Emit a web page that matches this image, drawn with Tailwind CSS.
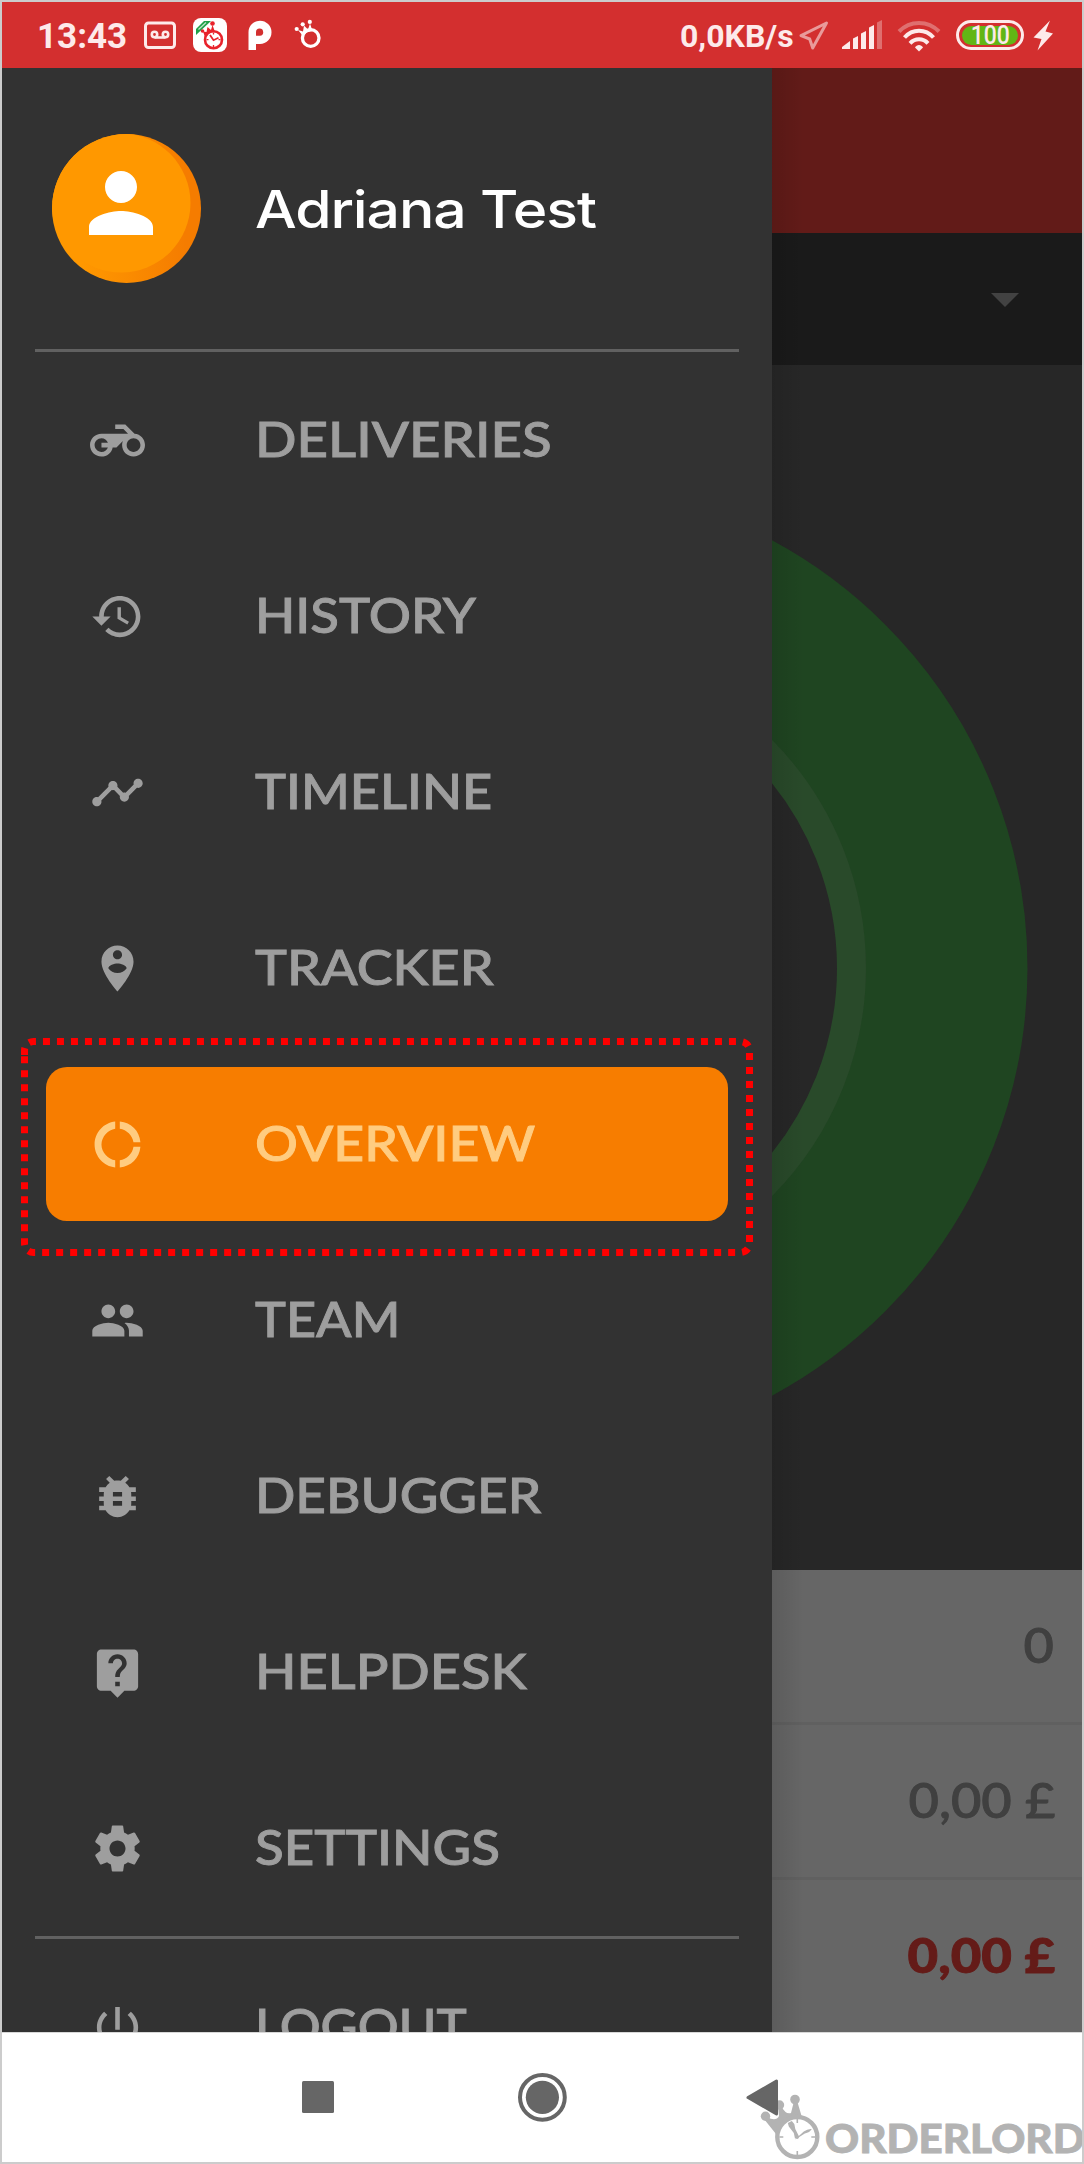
<!DOCTYPE html>
<html lang="en">
<head>
<meta charset="utf-8">
<title>Overview</title>
<script src="https://cdn.jsdelivr.net/npm/@tailwindcss/browser@4"></script>
</head>
<body class="bg-white">
<div class="relative flex h-[2164px] w-[1084px] flex-col overflow-hidden border-2 border-[#cccccc] bg-white font-['Lato',sans-serif]">

  <!-- Status bar -->
  <header class="flex h-[66px] shrink-0 items-center justify-between bg-[#d32f2f] font-['Roboto',sans-serif] text-[#fdeaea]">
    <div class="flex items-center pl-[35px]">
      <span class="w-[107px] pt-0.5 text-[35px] leading-none font-bold">13:43</span>
      <svg class="h-[66px] w-[200px]" viewBox="144 2 200 66" fill="none">
        <rect x="145.500" y="23" width="29" height="24.500" rx="3" stroke="#fdeaea" stroke-width="3"/>
        <g stroke="#fdeaea" stroke-width="2.600"><circle cx="154.500" cy="34.500" r="2.700"/><circle cx="165.500" cy="34.500" r="2.700"/><path d="M154.500 37.500h11"/></g>
        <rect x="193" y="18" width="34" height="34" rx="8" fill="#fff"/>
        <path d="M196 35v-6l8-8h7z" fill="#1fa048"/>
        <path d="M198.500 29.500l7.500-7" stroke="#bfe6ca" stroke-width="1.200"/>
        <g fill="#e8222b"><path d="M205 37l-2-5.500 3.500 .5 1-5 3.500 3 1.500-5 2.500 7z"/><circle cx="202.500" cy="31" r="1.800"/><circle cx="212.500" cy="23.500" r="2.300"/></g>
        <circle cx="213.500" cy="39.700" r="8.500" fill="#fff" stroke="#e8222b" stroke-width="2.600"/>
        <path d="M210 35l3.500 5.200 5-2.400" stroke="#e8222b" stroke-width="1.800"/>
        <path d="M213.500 32.500v2M213.500 45v2M206.500 39.700h2M218.500 39.700h2" stroke="#e8222b" stroke-width="1.300"/>
        <path fill-rule="evenodd" fill="#fff" d="M248.500 50V32.300a11.500 11.600 0 1 1 11.500 11.600h-4V50zM256 35.800h4a3.600 3.600 0 1 0-4-3.600z"/>
        <circle cx="310.700" cy="38" r="8.300" stroke="#fff" stroke-width="3.300"/>
        <path d="M303 36l-5-6 5 1.500 1-6 4 4 2-6 2.500 7.500-6 1.500z" fill="#fff"/>
        <g fill="#fff"><circle cx="296.700" cy="29" r="2.100"/><circle cx="302.700" cy="24.300" r="2.100"/><circle cx="309.800" cy="21.900" r="2.100"/></g>
      </svg>
    </div>
    <div class="flex items-center">
      <span class="w-[117px] pt-0.5 text-[32px] leading-none font-bold">0,0KB/s</span>
      <svg class="h-[66px] w-[158px]" viewBox="797 2 158 66" fill="none">
        <path d="M826.500 23L801 35.700l8.700 3.300 3 9z" stroke="#e99a9a" stroke-width="3" stroke-linejoin="round"/>
        <path fill="#fdeaea" d="M842 49v-2l8-6v8zM853 49V38.500l5-2.500v13zM861 49V33.500l5-2.500v18zM869 49V27.500l5-2.500v24z"/>
        <path fill="#df6f6f" d="M877 49V22.500l5-2.500v29z"/>
        <path d="M899 31.500c11-11.500 29-11.500 40 0" stroke="#df6f6f" stroke-width="4"/>
        <path d="M904.500 37.500c8-9 21-9 29 0M910 43.300c5-5.300 13-5.300 18 0" stroke="#fdeaea" stroke-width="4"/>
        <path d="M915 47.500c1.500-3.500 6.500-3.500 8 0l-4 4z" fill="#fdeaea"/>
      </svg>
      <div class="ml-px flex h-[30px] w-[68px] items-center justify-center rounded-full border-[3px] border-[#fdeaea]">
        <div class="flex h-[19px] w-14 items-center justify-center rounded-full bg-[#62b515]">
          <span class="scale-x-[.92] text-[25px] leading-none font-medium">100</span>
        </div>
      </div>
      <svg class="h-[66px] w-[58px]" viewBox="1024 2 58 66"><path fill="#fdeaea" d="M1050 20.500L1033.500 37.500l8 1.500-4 11.500L1053 33.500l-7.500-2z"/></svg>
    </div>
  </header>

  <main class="flex h-[1964px] shrink-0">
    <!-- Navigation drawer -->
    <aside class="h-full w-[770px] shrink-0 overflow-hidden bg-[#323232]">
      <div class="flex h-[281px] items-center pl-[50px]">
        <svg class="size-[149px] shrink-0" viewBox="0 0 149 149">
          <defs>
            <linearGradient id="rim"><stop offset=".2" stop-color="#ff9800"/><stop offset=".9" stop-color="#f57c00"/></linearGradient>
            <clipPath id="disc"><circle cx="74.500" cy="74.500" r="74.500"/></clipPath>
          </defs>
          <circle cx="74.500" cy="74.500" r="74.500" fill="url(#rim)"/>
          <circle cx="69" cy="69" r="69.500" fill="#ff9800" clip-path="url(#disc)"/>
          <path transform="translate(21 21) scale(4)" fill="#fff" d="M12 12c2.210 0 4-1.790 4-4s-1.790-4-4-4-4 1.790-4 4 1.790 4 4 4zm0 2c-2.670 0-8 1.340-8 4v2h16v-2c0-2.660-5.330-4-8-4z"/>
        </svg>
        <span class="ml-[54px] origin-left scale-x-[1.133] pt-0.5 font-['Inter',sans-serif] text-[52px] leading-none font-medium tracking-[-1px] whitespace-nowrap text-white">Adriana Test</span>
      </div>
      <div class="mx-[33px] h-[3px] bg-[#616161]"></div>

      <nav class="text-[48px] leading-none font-medium text-[#9e9e9e] [-webkit-text-stroke:0.9px]">
        <div class="flex h-44 items-center pl-[88px]">
          <svg class="size-[55px]" viewBox="0 0 24 24" fill="currentColor"><path d="M19.440 9.030L15.410 5H11v2h3.590l2 2H5c-2.800 0-5 2.200-5 5s2.200 5 5 5c2.460 0 4.450-1.690 4.900-4h1.650l2.770-2.770c-.21.54-.32 1.140-.32 1.770 0 2.800 2.200 5 5 5s5-2.200 5-5c0-2.650-1.970-4.770-4.560-4.970zM7.820 15C7.400 16.150 6.280 17 5 17c-1.630 0-3-1.370-3-3s1.370-3 3-3c1.280 0 2.400.85 2.820 2H5v2h2.820zM19 17c-1.660 0-3-1.340-3-3s1.340-3 3-3 3 1.340 3 3-1.340 3-3 3z"/></svg>
          <span class="ml-[110px] origin-left scale-x-[1.138] pb-0.5">DELIVERIES</span>
        </div>
        <div class="flex h-44 items-center pl-[88px]">
          <svg class="size-[55px]" viewBox="0 0 24 24" fill="currentColor"><path d="M13 3c-4.970 0-9 4.030-9 9H1l3.890 3.890.07.14L9 12H6c0-3.870 3.130-7 7-7s7 3.130 7 7-3.130 7-7 7c-1.930 0-3.680-.79-4.940-2.060l-1.420 1.420C8.270 19.990 10.510 21 13 21c4.970 0 9-4.030 9-9s-4.030-9-9-9zm-1 5v5l4.280 2.540.72-1.210-3.500-2.080V8H12z"/></svg>
          <span class="ml-[110px] origin-left scale-x-[1.098] pb-0.5">HISTORY</span>
        </div>
        <div class="flex h-44 items-center pl-[88px]">
          <svg class="size-[55px]" viewBox="0 0 24 24" fill="currentColor"><path d="M23 8c0 1.100-.9 2-2 2-.18 0-.35-.02-.51-.07l-3.560 3.550c.05.16.07.34.07.52 0 1.100-.9 2-2 2s-2-.9-2-2c0-.18.02-.36.07-.52l-2.550-2.550c-.16.05-.34.07-.52.07s-.36-.02-.52-.07l-4.550 4.560c.05.16.07.33.07.51 0 1.100-.9 2-2 2s-2-.9-2-2 .9-2 2-2c.18 0 .35.02.51.07l4.560-4.550C8.020 9.360 8 9.180 8 9c0-1.100.9-2 2-2s2 .9 2 2c0 .18-.02.36-.07.52l2.550 2.550c.16-.05.34-.07.52-.07s.36.02.52.07l3.550-3.560C19.020 8.350 19 8.180 19 8c0-1.100.9-2 2-2s2 .9 2 2z"/></svg>
          <span class="ml-[110px] origin-left scale-x-[1.092] pb-0.5">TIMELINE</span>
        </div>
        <div class="flex h-44 items-center pl-[88px]">
          <svg class="size-[55px]" viewBox="0 0 24 24" fill="currentColor"><path d="M12 2C8.140 2 5 5.140 5 9c0 5.250 7 13 7 13s7-7.750 7-13c0-3.860-3.140-7-7-7zm0 2c1.100 0 2 .9 2 2 0 1.110-.9 2-2 2s-2-.89-2-2c0-1.100.9-2 2-2zm0 10c-1.670 0-3.140-.85-4-2.150.02-1.320 2.670-2.050 4-2.050s3.980.73 4 2.050c-.86 1.300-2.330 2.150-4 2.150z"/></svg>
          <span class="ml-[110px] origin-left scale-x-[1.123] pb-0.5">TRACKER</span>
        </div>
        <div class="px-[44px] py-[11px]">
          <div class="flex h-[154px] items-center rounded-[21px] bg-[#f77d00] pl-[44px] text-[#ffcc80]">
            <svg class="size-[55px]" viewBox="0 0 24 24" fill="currentColor"><path d="M11 5.080V2c-5 .5-9 4.810-9 10s4 9.500 9 10v-3.080c-3-.48-6-3.400-6-6.920s3-6.440 6-6.920zM18.970 11H22c-.47-5-4-8.530-9-9v3.080C16 5.510 18.540 8 18.970 11zM13 18.920V22c5-.47 8.530-4 9-9h-3.030c-.43 3-2.970 5.490-5.970 5.920z"/></svg>
            <span class="ml-[110px] origin-left scale-x-[1.115] pb-0.5">OVERVIEW</span>
          </div>
        </div>
        <div class="flex h-44 items-center pl-[88px]">
          <svg class="size-[55px]" viewBox="0 0 24 24" fill="currentColor"><path d="M16 11c1.660 0 2.990-1.340 2.990-3S17.660 5 16 5c-1.660 0-3 1.340-3 3s1.340 3 3 3zm-8 0c1.660 0 2.990-1.340 2.990-3S9.660 5 8 5C6.340 5 5 6.340 5 8s1.340 3 3 3zm0 2c-2.330 0-7 1.170-7 3.500V19h14v-2.500c0-2.330-4.670-3.500-7-3.500zm8 0c-.29 0-.62.02-.97.05 1.160.84 1.970 1.970 1.970 3.450V19h6v-2.500c0-2.330-4.670-3.500-7-3.500z"/></svg>
          <span class="ml-[110px] origin-left scale-x-[1.088] pb-0.5">TEAM</span>
        </div>
        <div class="flex h-44 items-center pl-[88px]">
          <svg class="size-[55px]" viewBox="0 0 24 24" fill="currentColor"><path d="M20 8h-2.810c-.45-.78-1.070-1.450-1.820-1.960L17 4.410 15.590 3l-2.170 2.170C12.960 5.060 12.490 5 12 5c-.49 0-.96.06-1.410.17L8.410 3 7 4.410l1.620 1.630C7.880 6.550 7.260 7.220 6.810 8H4v2h2.090c-.05.33-.09.66-.09 1v1H4v2h2v1c0 .34.04.67.09 1H4v2h2.810c1.040 1.790 2.970 3 5.190 3s4.150-1.210 5.190-3H20v-2h-2.090c.05-.33.09-.66.09-1v-1h2v-2h-2v-1c0-.34-.04-.67-.09-1H20V8zm-6 8h-4v-2h4v2zm0-4h-4v-2h4v2z"/></svg>
          <span class="ml-[110px] origin-left scale-x-[1.106] pb-0.5">DEBUGGER</span>
        </div>
        <div class="flex h-44 items-center pl-[88px]">
          <svg class="size-[55px]" viewBox="0 0 24 24" fill="currentColor"><path d="M19 2H5c-1.110 0-2 .9-2 2v14c0 1.100.89 2 2 2h4l3 3 3-3h4c1.100 0 2-.9 2-2V4c0-1.100-.9-2-2-2zm-6 16h-2v-2h2v2zm2.070-7.750l-.9.92C13.450 11.900 13 12.500 13 14h-2v-.5c0-1.100.45-2.100 1.170-2.830l1.240-1.260c.37-.36.59-.86.59-1.410 0-1.100-.9-2-2-2s-2 .9-2 2H8c0-2.210 1.790-4 4-4s4 1.790 4 4c0 .88-.36 1.680-.93 2.250z"/></svg>
          <span class="ml-[110px] origin-left scale-x-[1.13] pb-0.5">HELPDESK</span>
        </div>
        <div class="flex h-44 items-center pl-[88px]">
          <svg class="size-[55px]" viewBox="0 0 24 24" fill="currentColor"><path d="M19.430 12.980c.04-.32.07-.64.07-.98s-.03-.66-.07-.98l2.110-1.650c.19-.15.24-.42.12-.64l-2-3.460c-.12-.22-.39-.3-.61-.22l-2.490 1c-.52-.4-1.080-.73-1.690-.98l-.38-2.650C14.460 2.180 14.250 2 14 2h-4c-.25 0-.46.18-.49.42l-.38 2.650c-.61.25-1.170.59-1.690.98l-2.490-1c-.23-.09-.49 0-.61.22l-2 3.460c-.13.22-.07.49.12.64l2.110 1.650c-.04.32-.07.65-.07.98s.03.66.07.98l-2.110 1.650c-.19.15-.24.42-.12.64l2 3.460c.12.22.39.3.61.22l2.490-1c.52.4 1.080.73 1.690.98l.38 2.650c.03.24.24.42.49.42h4c.25 0 .46-.18.49-.42l.38-2.650c.61-.25 1.170-.59 1.690-.98l2.490 1c.23.09.49 0 .61-.22l2-3.460c.12-.22.07-.49-.12-.64l-2.110-1.650zM12 15.500c-1.930 0-3.500-1.570-3.500-3.500s1.570-3.500 3.500-3.500 3.500 1.570 3.500 3.500-1.570 3.500-3.500 3.500z"/></svg>
          <span class="ml-[110px] origin-left scale-x-[1.102] pb-0.5">SETTINGS</span>
        </div>
        <div class="mx-[33px] h-[3px] bg-[#616161]"></div>
        <div class="flex h-44 items-center pl-[88px]">
          <svg class="size-[55px]" viewBox="0 0 24 24" fill="currentColor"><path d="M13 3h-2v10h2V3zm4.830 2.170l-1.420 1.420C17.990 7.860 19 9.810 19 12c0 3.870-3.130 7-7 7s-7-3.130-7-7c0-2.190 1.010-4.140 2.580-5.420L6.170 5.170C4.230 6.820 3 9.260 3 12c0 4.970 4.030 9 9 9s9-4.030 9-9c0-2.740-1.230-5.180-3.170-6.830z"/></svg>
          <span class="ml-[110px] origin-left scale-x-[1.063] pb-0.5">LOGOUT</span>
        </div>
      </nav>
    </aside>

    <!-- Dimmed page behind the drawer -->
    <section class="relative flex h-full w-[310px] flex-col overflow-hidden">
      <div class="h-[165px] shrink-0 bg-[#621b18]"></div>
      <div class="flex h-[132px] shrink-0 items-center justify-end bg-[#1a1a1a] pt-0.5 pr-[63px]">
        <svg class="h-[14px] w-7" viewBox="0 0 28 14"><path d="M0 0h28L14 14z" fill="#424242"/></svg>
      </div>
      <svg class="h-[1205px] w-[310px] shrink-0 bg-[#272727]" viewBox="0 0 310 1205" fill="none">
        <circle cx="-230" cy="603" r="404.500" stroke="#1f4521" stroke-width="162"/>
        <circle cx="-230" cy="603" r="309.500" stroke="#294a2a" stroke-width="29"/>
      </svg>
      <div class="flex h-[462px] shrink-0 flex-col bg-[#666666] text-[48px] leading-none font-medium text-[#404040] [-webkit-text-stroke:0.9px]">
        <div class="flex h-[155px] items-center justify-end border-b-[3px] border-[#606060] pr-[28px]"><span class="origin-right scale-x-[1.09] pb-0.5">0</span></div>
        <div class="flex h-[155px] items-center justify-end border-b-[3px] border-[#606060] pr-[27px]"><span class="origin-right scale-x-[1.093] pb-0.5">0,00 £</span></div>
        <div class="flex h-[152px] items-center justify-end pr-[27px] font-black text-[#641b18]"><span class="origin-right scale-x-[1.1] pb-0.5">0,00 £</span></div>
      </div>
      <div class="absolute inset-y-0 left-0 w-8 bg-linear-to-r from-black/10 to-transparent"></div>
    </section>
  </main>

  <!-- System navigation -->
  <footer class="h-[130px] shrink-0 border-t border-[#d8d8d8]">
    <svg class="block h-[129px] w-[1080px]" viewBox="2 2033 1080 129">
      <g fill="#b3b3b3">
        <path d="M776 2134L764 2119l3-2q9 5 12-1l-1-9 3-1q5 9 10 7l3-12 3-.5 5 17z"/>
        <circle cx="765.500" cy="2116.200" r="4.700"/><circle cx="779.500" cy="2105" r="4.700"/><circle cx="795" cy="2099.500" r="4.800"/>
      </g>
      <circle cx="797.300" cy="2137" r="20" fill="#fff" stroke="#b3b3b3" stroke-width="4.400"/>
      <path d="M797.300 2119v4M797.300 2151v4M779.300 2137h4M811.300 2137h4" stroke="#b3b3b3" stroke-width="1.600"/>
      <path d="M795.300 2140l-1.500-7-5-6.500-1-3.500 4-2 2.500 3 1 5 3.500 7 5-4.500q4-3 8-2.500-2 3.500-7 4.500l-5.500 3.500q-1.500 3.500-4 1z" fill="#b3b3b3"/>
      <rect x="302" y="2081" width="32" height="32" rx="1.500" fill="#666"/>
      <circle cx="542.400" cy="2097.300" r="22.400" fill="none" stroke="#666" stroke-width="4"/>
      <circle cx="542.400" cy="2097.300" r="16.600" fill="#666"/>
      <path d="M748 2097.500L776.500 2081v33z" fill="#666" stroke="#666" stroke-width="3" stroke-linejoin="round"/>
    </svg>
  </footer>

  <!-- Watermark wordmark -->
  <div class="absolute top-[2115px] left-[823px] origin-left scale-x-[1.08] font-['Lato',sans-serif] text-[39px] leading-[42px] font-black whitespace-nowrap text-[#b3b3b3] [-webkit-text-stroke:0.8px]">ORDERLORD</div>

  <!-- Callout around the active item -->
  <svg class="pointer-events-none absolute top-[1034px] left-[16px] h-[222px] w-[740px]" viewBox="18 1036 740 222" fill="none">
    <path d="M24.500 1055V1050.500a9 9 0 0 1 9-9H740.500a9 9 0 0 1 9 9V1243.500a9 9 0 0 1-9 9H33.500a9 9 0 0 1-9-9Z" stroke="#ff0000" stroke-width="7" stroke-dasharray="7 7"/>
  </svg>
</div>
</body>
</html>
